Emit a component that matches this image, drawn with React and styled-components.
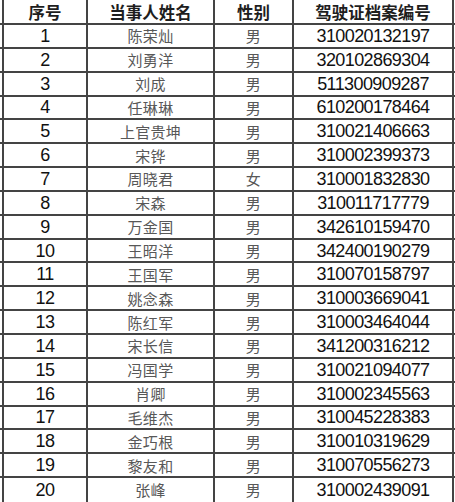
import React from "react";
import styled, { createGlobalStyle } from "styled-components";

const GlobalStyle = createGlobalStyle`
  html, body { margin: 0; padding: 0; background: #ffffff; }
  body { width: 455px; height: 502px; overflow: hidden; }
`;

const data = [
  ["1", "陈荣灿", "男", "310020132197"],
  ["2", "刘勇洋", "男", "320102869304"],
  ["3", "刘成", "男", "511300909287"],
  ["4", "任琳琳", "男", "610200178464"],
  ["5", "上官贵坤", "男", "310021406663"],
  ["6", "宋铧", "男", "310002399373"],
  ["7", "周晓君", "女", "310001832830"],
  ["8", "宋森", "男", "310011717779"],
  ["9", "万金国", "男", "342610159470"],
  ["10", "王昭洋", "男", "342400190279"],
  ["11", "王国军", "男", "310070158797"],
  ["12", "姚念森", "男", "310003669041"],
  ["13", "陈红军", "男", "310003464044"],
  ["14", "宋长信", "男", "341200316212"],
  ["15", "冯国学", "男", "310021094077"],
  ["16", "肖卿", "男", "310002345563"],
  ["17", "毛维杰", "男", "310045228383"],
  ["18", "金巧根", "男", "310010319629"],
  ["19", "黎友和", "男", "310070556273"],
  ["20", "张峰", "男", "310002439091"],
];

const Table = styled.div`
  width: 455px;
  display: flex;
  flex-direction: column;
`;

const Row = styled.div`
  display: grid;
  grid-template-columns: 84px 127px 79px 160px 1fr;
  padding-left: 2px;
  height: ${(p) => (p.$header ? "25px" : "23.85px")};
  box-sizing: border-box;
  border-bottom: ${(p) => (p.$last ? "none" : "2px solid #444")};
`;

const Cell = styled.div`
  display: flex;
  align-items: center;
  justify-content: center;
  border-left: 2px solid #444;
  box-sizing: border-box;
  white-space: nowrap;
  overflow: hidden;
`;

const HeadCell = styled(Cell)`
  font-family: "Noto Sans CJK SC", "Noto Sans", sans-serif;
  font-weight: 700;
  font-size: 16.5px;
  color: #1e1e1e;
  padding-top: 1px;
`;

const NumCell = styled(Cell)`
  font-family: "Liberation Sans", Arial, sans-serif;
  font-size: 18px;
  letter-spacing: -0.6px;
  color: #111;
  padding-top: 1px;
`;

const NameCell = styled(Cell)`
  font-family: "Noto Sans CJK SC", "Noto Sans", sans-serif;
  font-weight: 400;
  font-size: 15px;
  letter-spacing: 0.3px;
  color: #585858;
`;

const Edge = styled.div`
  border-left: 2px solid #444;
`;

export default function App() {
  return (
    <>
      <GlobalStyle />
      <Table>
        <Row $header>
          <HeadCell>序号</HeadCell>
          <HeadCell>当事人姓名</HeadCell>
          <HeadCell>性别</HeadCell>
          <HeadCell>驾驶证档案编号</HeadCell>
          <Edge />
        </Row>
        {data.map(([n, name, g, id], i) => (
          <Row key={n} $last={i === data.length - 1}>
            <NumCell>{n}</NumCell>
            <NameCell>{name}</NameCell>
            <NameCell>{g}</NameCell>
            <NumCell>{id}</NumCell>
            <Edge />
          </Row>
        ))}
      </Table>
    </>
  );
}
